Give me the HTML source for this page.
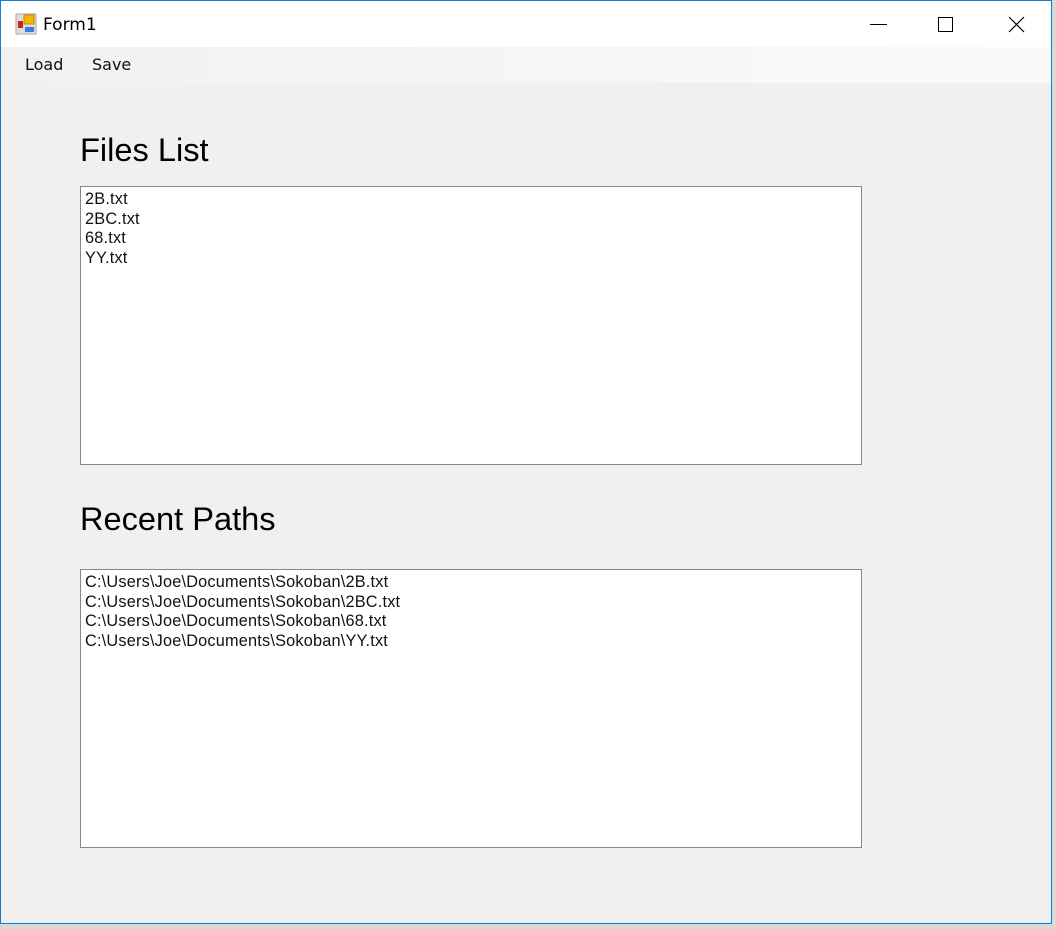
<!DOCTYPE html><html><head><style>
body{margin:0;width:1056px;height:929px;background:#d9d9d9;position:relative;overflow:hidden;font-family:"Liberation Sans",Arial,sans-serif}
.win{position:absolute;left:0;top:0;width:1050px;height:922px;border:1px solid #1979ca;background:#f0f0f0}
.title{position:absolute;left:0;top:0;width:1050px;height:46px;background:#fff}
.menu{position:absolute;left:0;top:46px;width:1050px;height:36px;background:linear-gradient(90deg,#f1f1f1,#fafafa)}
.mi{position:absolute;top:54px;color:#111;font-family:"DejaVu Sans",sans-serif;font-size:16px}
h1{position:absolute;margin:0;font-weight:normal;font-size:32.6px;color:#000;left:79px}
.lb{position:absolute;left:79px;width:782px;height:279px;background:#fff;border:1px solid #828790;font-size:16.3px;line-height:19.6px;padding:3px 4px;box-sizing:border-box;color:#111;letter-spacing:0.2px}
</style></head><body>
<div class="win">
<div class="title"></div>
<svg style="position:absolute;left:14px;top:12px" width="22" height="22"><rect x="1" y="1" width="20" height="20" fill="#ddd" stroke="#aaa"/><rect x="9" y="2" width="10" height="9" fill="#f5b800" stroke="#c98a00"/><rect x="3" y="8" width="5" height="7" fill="#c22"/><rect x="10" y="14" width="9" height="5" fill="#3a7be0"/></svg>
<div style="position:absolute;left:42px;top:14px;font-size:17px;font-family:'DejaVu Sans',sans-serif">Form1</div>
<div style="position:absolute;left:869px;top:23px;width:17px;height:1px;background:#000"></div>
<div style="position:absolute;left:937px;top:16px;width:13px;height:13px;border:1px solid #000"></div>
<svg style="position:absolute;left:1007px;top:15px" width="17" height="17"><path d="M1 1L16 16M16 1L1 16" stroke="#000" stroke-width="1.2"/></svg>
<div class="menu"></div>
<div class="mi" style="left:24px">Load</div>
<div class="mi" style="left:91px">Save</div>
<h1 style="top:130px">Files List</h1>
<div class="lb" style="top:185px">2B.txt<br>2BC.txt<br>68.txt<br>YY.txt</div>
<h1 style="top:499px">Recent Paths</h1>
<div class="lb" style="top:568px">C:\Users\Joe\Documents\Sokoban\2B.txt<br>C:\Users\Joe\Documents\Sokoban\2BC.txt<br>C:\Users\Joe\Documents\Sokoban\68.txt<br>C:\Users\Joe\Documents\Sokoban\YY.txt</div>
</div>
</body></html>
